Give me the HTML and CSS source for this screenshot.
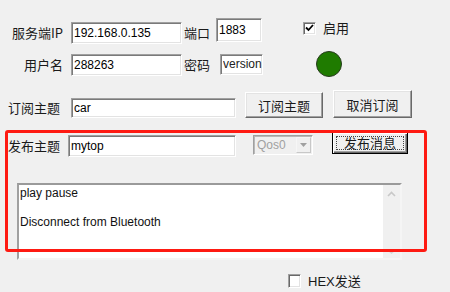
FILE: index.html
```html
<!DOCTYPE html>
<html lang="zh">
<head>
    <meta charset="UTF-8">
    <title>MQTT 客户端</title>
    <link rel="stylesheet" href="styles.css">
</head>
<body>
    <div class="panel">
        <!-- 服务器 -->
        <div class="row row-server">
            <label class="label label-wide">服务端IP</label>
            <input class="edit edit-host" type="text" value="192.168.0.135">
            <label class="label label-short">端口</label>
            <input class="edit edit-port" type="text" value="1883">
            <span class="check checked">
                <svg width="9" height="8" viewBox="0 0 9 8"><path d="M1 3.5 L3.5 6 L8 1" fill="none" stroke="#000" stroke-width="1.8"/></svg>
            </span>
            <span class="check-text">启用</span>
        </div>

        <div class="row row-user">
            <label class="label label-wide">用户名</label>
            <input class="edit edit-host" type="text" value="288263">
            <label class="label label-short">密码</label>
            <input class="edit edit-pass" type="text" value="version:">
            <span class="status-led"></span>
        </div>

        <!-- 订阅 -->
        <div class="row row-sub">
            <label class="label label-topic">订阅主题</label>
            <input class="edit edit-sub" type="text" value="car">
            <button class="btn btn-sub">订阅主题</button>
            <button class="btn btn-unsub">取消订阅</button>
        </div>

        <!-- 发布 -->
        <div class="row row-pub">
            <label class="label label-topic">发布主题</label>
            <input class="edit edit-pub" type="text" value="mytop">
            <div class="combo">
                <span class="combo-text">Qos0</span>
                <span class="combo-arrow">
                    <svg width="7" height="4" viewBox="0 0 7 4"><path d="M0 0 H7 L3.5 4 Z" fill="#a0a0a0"/></svg>
                </span>
            </div>
            <button class="btn btn-default"><span class="focus">发布消息</span></button>
        </div>

        <div class="message-box">
            <div class="message-lines">
                <div class="line">play pause</div>
                <div class="line">&nbsp;</div>
                <div class="line">Disconnect from Bluetooth</div>
            </div>
            <div class="scrollbar">
                <svg width="9" height="6" viewBox="0 0 9 6"><path d="M1 5 L4.5 1.5 L8 5" fill="none" stroke="#c8c8c8" stroke-width="1.6"/></svg>
                <svg width="9" height="5" viewBox="0 0 9 5"><path d="M1 1 L4.5 4 L8 1" fill="none" stroke="#d4d4d4" stroke-width="1.4"/></svg>
            </div>
        </div>

        <div class="row row-hex">
            <span class="check"></span>
            <span class="check-text">HEX发送</span>
        </div>
    </div>

    <!-- 标注框 -->
    <div class="highlight"></div>
</body>
</html>
```

FILE: styles.css
```css
body {
    margin: 0;
    padding: 0;
    width: 450px;
    height: 292px;
    overflow: hidden;
    background-color: #f0f0f0;
    font-family: "Liberation Sans", "Noto Sans CJK SC", sans-serif;
    font-size: 12px;
    color: #000;
    position: relative;
}

.panel {
    padding-top: 18px;
}

.row {
    display: flex;
}

.label {
    font-family: "Noto Sans CJK SC", sans-serif;
    font-size: 13px;
    color: #1a1a1a;
    text-align: right;
    white-space: nowrap;
}

.label-wide {
    width: 63px;
}

.label-short {
    width: 27px;
    margin-left: 2px;
    text-align: left;
}

.label-topic {
    width: 60px;
}

/* 输入框 */
.edit {
    box-sizing: border-box;
    margin: 0;
    padding: 0 0 0 2px;
    background: #fff;
    border: 1px solid;
    border-color: #a0a0a0 #ffffff #ffffff #a0a0a0;
    box-shadow: inset 1px 1px 0 #7a7a7a, inset -1px -1px 0 #e3e3e3;
    font-family: "Liberation Sans", sans-serif;
    font-size: 12px;
    color: #000;
    outline: none;
}

/* 第一行 */
.row-server {
    height: 26px;
    align-items: center;
}

.row-server .label {
    margin-top: 2px;
}

.edit-host {
    width: 111px;
    height: 22px;
    margin-left: 8px;
}

.row-server .edit-host {
    margin-top: 3px;
}

.edit-port {
    width: 46px;
    height: 24px;
    margin-left: 5px;
    margin-top: -2px;
}

.check {
    box-sizing: border-box;
    width: 13px;
    height: 13px;
    background: #fff;
    border: 1px solid;
    border-color: #a0a0a0 #ffffff #ffffff #a0a0a0;
    box-shadow: inset 1px 1px 0 #696969, inset -1px -1px 0 #e3e3e3;
    display: flex;
    align-items: center;
    justify-content: center;
}

.row-server .check {
    margin-left: 41px;
    margin-top: -6px;
}

.check-text {
    font-family: "Noto Sans CJK SC", sans-serif;
    font-size: 13px;
    margin-left: 7px;
    color: #1a1a1a;
}

.row-server .check-text {
    margin-top: -7px;
}

/* 第二行 */
.row-user {
    margin-top: 7px;
    height: 26px;
    align-items: center;
}

.row-user .edit-host {
    margin-top: 1px;
}

.edit-pass {
    width: 43px;
    height: 21px;
    margin-left: 9px;
    color: #222;
}

.status-led {
    box-sizing: border-box;
    width: 26px;
    height: 26px;
    margin-left: 53px;
    border-radius: 50%;
    background: #1f7b00;
    border: 1px solid #263a1c;
}

/* 订阅 */
.row-sub {
    margin-top: 13px;
    height: 28px;
    align-items: flex-end;
}

.row-sub .label {
    line-height: 20px;
}

.edit-sub {
    width: 165px;
    height: 20px;
    margin-left: 11px;
}

.btn {
    box-sizing: border-box;
    margin: 0;
    padding: 0;
    background: #f0f0f0;
    border: 1px solid;
    border-color: #ffffff #696969 #696969 #ffffff;
    box-shadow: inset -1px -1px 0 #a0a0a0, inset 1px 1px 0 #e3e3e3;
    font-family: "Noto Sans CJK SC", sans-serif;
    font-size: 13px;
    color: #1a1a1a;
}

.btn-sub {
    width: 78px;
    height: 26px;
    margin-left: 9px;
}

.btn-unsub {
    width: 79px;
    height: 28px;
    margin-left: 10px;
}

/* 发布 */
.row-pub {
    margin-top: 14px;
    height: 26px;
    align-items: flex-start;
}

.row-pub .label {
    margin-top: 3px;
    line-height: 22px;
}

.edit-pub {
    width: 168px;
    height: 22px;
    margin-left: 8px;
    margin-top: 3px;
}

.combo {
    box-sizing: border-box;
    width: 60px;
    height: 20px;
    margin-left: 17px;
    margin-top: 3px;
    background: #f0f0f0;
    border: 1px solid;
    border-color: #a0a0a0 #ffffff #ffffff #a0a0a0;
    box-shadow: inset 1px 1px 0 #b9b9b9;
    display: flex;
    align-items: center;
}

.combo-text {
    flex: 1;
    padding-left: 3px;
    color: #a0a0a0;
    font-size: 12px;
}

.combo-arrow {
    box-sizing: border-box;
    width: 15px;
    height: 16px;
    margin-right: 1px;
    border: 1px solid;
    border-color: #f6f6f6 #c8c8c8 #c8c8c8 #f6f6f6;
    display: flex;
    align-items: center;
    justify-content: center;
}

.btn-default {
    width: 76px;
    height: 22px;
    margin-left: 19px;
    border: 1px solid #000;
    box-shadow: inset 1px 1px 0 #fff, inset -1px -1px 0 #696969, inset -2px -2px 0 #a0a0a0;
    padding: 3px;
    display: flex;
}

.focus {
    flex: 1;
    border: 1px dotted #444;
    line-height: 12px;
    display: flex;
    align-items: center;
    justify-content: center;
}

/* 消息区 */
.message-box {
    box-sizing: border-box;
    width: 385px;
    height: 77px;
    margin: 25px 0 0 17px;
    background: #fff;
    border: 2px solid;
    border-color: #9a9a9a #f5f5f5 #f5f5f5 #a0a0a0;
    display: flex;
}

.message-lines {
    flex: 1;
    padding: 1px 0 0 1px;
}

.line {
    line-height: 14.5px;
    color: #111;
}

.scrollbar {
    width: 17px;
    background: #f0f0f0;
    display: flex;
    flex-direction: column;
    align-items: center;
    justify-content: space-between;
    padding: 6px 0 4px;
}

/* HEX */
.row-hex {
    margin-top: 11px;
    margin-left: 288px;
    align-items: center;
}

.row-hex .check {
    width: 13px;
    height: 14px;
}

.row-hex .check-text {
    margin-left: 7px;
    font-family: "Liberation Sans", "Noto Sans CJK SC", sans-serif;
}

/* 红色标注框 */
.highlight {
    position: absolute;
    left: 5px;
    top: 130px;
    width: 422px;
    height: 122px;
    box-sizing: border-box;
    border: 3px solid #fe1a12;
    border-radius: 3px;
}
```
